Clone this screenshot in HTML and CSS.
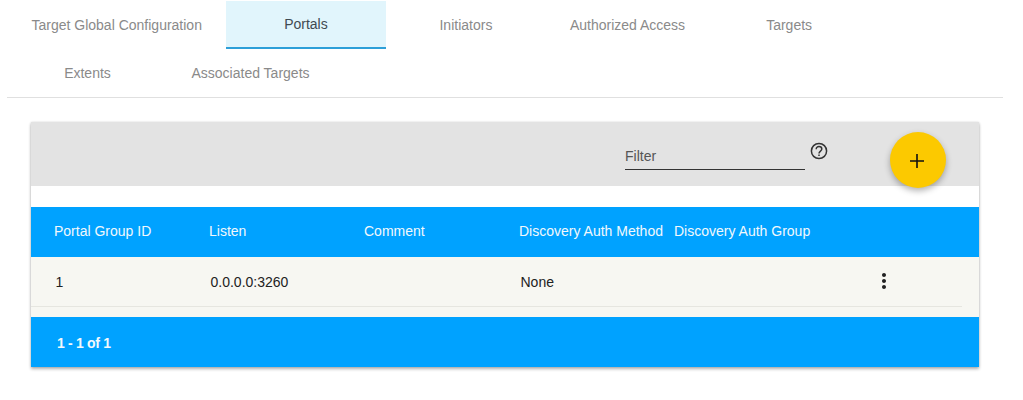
FILE: index.html
```html
<!DOCTYPE html>
<html lang="en">
<head>
<meta charset="utf-8">
<title>Portals</title>
<link rel="stylesheet" href="styles.css">
</head>
<body>
<div class="page">
  <nav class="tabs">
    <a class="tab">Target Global Configuration</a>
    <a class="tab active">Portals</a>
    <a class="tab">Initiators</a>
    <a class="tab">Authorized Access</a>
    <a class="tab">Targets</a>
    <a class="tab">Extents</a>
    <a class="tab">Associated Targets</a>
  </nav>
  <section class="card">
    <div class="toolbar">
      <div class="filter">Filter</div>
      <svg class="help" width="20" height="20" viewBox="0 0 20 20" fill="none" stroke="#333" stroke-width="1.5"><circle cx="10" cy="10" r="7.6"/><path d="M7.2 8.2c0-1.6 1.2-2.6 2.8-2.6s2.8 1 2.8 2.5c0 2-2.8 2-2.8 4.3"/><path d="M10 13.4v1.6"/></svg>
      <button class="fab" aria-label="Add"><svg width="24" height="24" viewBox="0 0 24 24" fill="#111"><path d="M19 12.8h-6.2V19h-1.6v-6.2H5v-1.6h6.2V5h1.6v6.2H19v1.6z"/></svg></button>
    </div>
    <div class="gap"></div>
    <div class="row head">
      <div class="cell">Portal Group ID</div>
      <div class="cell">Listen</div>
      <div class="cell">Comment</div>
      <div class="cell">Discovery Auth Method</div>
      <div class="cell">Discovery Auth Group</div>
    </div>
    <div class="body">
      <div class="row data">
        <div class="cell">1</div>
        <div class="cell">0.0.0.0:3260</div>
        <div class="cell"></div>
        <div class="cell">None</div>
        <div class="cell"></div>
        <div class="cell actions"><svg width="24" height="24" viewBox="0 0 24 24" fill="#222"><path d="M12 8c1.1 0 2-.9 2-2s-.9-2-2-2-2 .9-2 2 .9 2 2 2zm0 2c-1.1 0-2 .9-2 2s.9 2 2 2 2-.9 2-2-.9-2-2-2zm0 6c-1.1 0-2 .9-2 2s.9 2 2 2 2-.9 2-2-.9-2-2-2z"/></svg></div>
      </div>
    </div>
    <div class="foot">1 - 1 of 1</div>
  </section>
</div>
</body>
</html>
```
FILE: styles.css
```css
* { box-sizing: border-box; }
html, body { margin: 0; padding: 0; background: #fff; overflow: hidden; }
body { font-family: "Liberation Sans", Arial, sans-serif; font-size: 14px; color: #222; }
.page { width: 1003px; padding: 1px 0 0 7px; height: 400px; }
.tabs {
  display: flex; flex-wrap: wrap; width: 996px; height: 97px; padding-left: 1px;
  border-bottom: 1px solid #e0e0e0; align-content: flex-start;
}
.tab {
  height: 48px; min-width: 160px; padding: 0 24.5px 0 23.5px;
  display: flex; align-items: center; justify-content: center;
  color: #8a8a8a; white-space: nowrap;
}
.tab.active { background: #e1f5fc; color: #3f4a52; border-bottom: 2px solid #2d9fd8; }
.card {
  width: 948px; height: 245px; margin: 24px 0 0 24px; background: #fff;
  box-shadow: 0 2px 3px rgba(0,0,0,.3), 0 0 2px rgba(0,0,0,.12);
}
.toolbar { position: relative; height: 64px; background: #e3e3e3; }
.filter {
  position: absolute; left: 594px; top: 20px; width: 180px; height: 28px;
  border-bottom: 1px solid #333; color: #555; line-height: 28px;
}
.help { position: absolute; left: 778px; top: 19px; }
.fab {
  position: absolute; left: 859px; top: 10px; width: 56px; height: 56px; padding: 2px 2px 0 0;
  border: 0; border-radius: 50%; background: #fcc900;
  display: flex; align-items: center; justify-content: center;
  box-shadow: 0 3px 6px rgba(0,0,0,.3);
}
.gap { height: 21px; }
.row { display: flex; align-items: center; }
.cell { width: 155px; flex: none; white-space: nowrap; }
.head { height: 50px; background: #00a2ff; color: #f2f8fc; padding: 0 0 2px 23px; }
.body { height: 60px; background: #f7f7f2; }
.data { height: 50px; width: 931px; padding-left: 24.5px; border-bottom: 1px solid #e6e6e0; }
.actions { width: auto; margin-left: 41.5px; display: flex; padding-bottom: 2px; }
.foot {
  height: 50px; background: #00a2ff; color: #f2f8fc; font-weight: bold; letter-spacing: -.3px;
  padding-left: 26px; line-height: 52px;
}
```
